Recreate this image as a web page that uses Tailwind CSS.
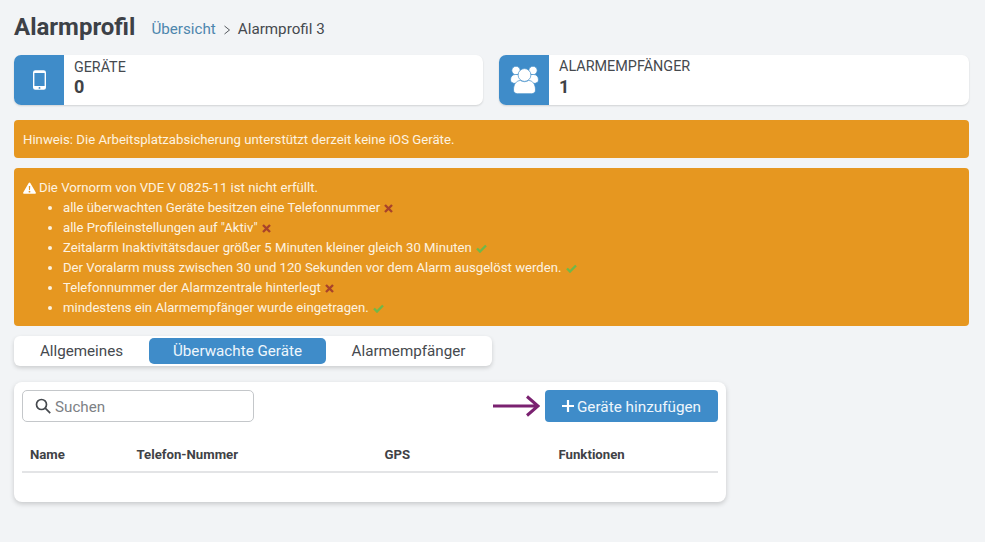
<!DOCTYPE html>
<html lang="de">
<head>
    <meta charset="UTF-8">
    <title>Alarmprofil</title>
    <script src="https://cdn.jsdelivr.net/npm/@tailwindcss/browser@4"></script>
</head>
<body class="bg-[#f2f4f6] font-['Roboto',sans-serif] text-[#3f4246] h-[542px] overflow-hidden">
<div class="pl-[14px] pr-[16px] pt-[12px]">

    <!-- Kopfzeile -->
    <div class="flex items-center h-[30px]">
        <h1 class="text-[24px] font-bold text-[#3d4147] leading-[30px]">Alarmprofil</h1>
        <a class="ml-[16px] mt-[5px] text-[15.2px] text-[#4d86ad]">Übersicht</a>
        <svg class="ml-[7px] mt-[5px]" width="8" height="10" viewBox="0 0 8 10" fill="none" stroke="#55595e" stroke-width="1"><path d="M1.5 1l5 4-5 4"/></svg>
        <span class="ml-[7px] mt-[5px] text-[15.2px] text-[#45494e]">Alarmprofil 3</span>
    </div>

    <!-- Kacheln -->
    <div class="grid grid-cols-[469px_1fr] gap-[16px] mt-[13px]">
        <div class="flex h-[50px] bg-white rounded-[7px] overflow-hidden shadow-[0_1px_2px_rgba(0,0,0,0.14)]">
            <div class="w-[50px] bg-[#3f8cc9] flex items-center justify-center">
                <svg width="13" height="20" viewBox="0 0 14 21"><path fill="#fff" fill-rule="evenodd" d="M2.5 0h9A2.5 2.5 0 0 1 14 2.5v16a2.5 2.5 0 0 1-2.5 2.5h-9A2.5 2.5 0 0 1 0 18.5v-16A2.5 2.5 0 0 1 2.5 0zM1.500 3v14h11V3zm5.500 15a1 1 0 1 0 0 2 1 1 0 0 0 0-2z"/></svg>
            </div>
            <div class="pl-[10px] pt-[2px]">
                <div class="text-[14.3px] leading-[20px] text-[#45494e]">GERÄTE</div>
                <div class="text-[18px] leading-[20px] font-bold text-[#3f4246]">0</div>
            </div>
        </div>
        <div class="flex h-[50px] bg-white rounded-[7px] overflow-hidden shadow-[0_1px_2px_rgba(0,0,0,0.14)]">
            <div class="w-[50px] bg-[#3f8cc9] flex items-center justify-center">
                <svg width="29" height="28" viewBox="0 0 29 28" fill="#fff" stroke="#3f8cc9" stroke-width="0.7">
                    <circle cx="6" cy="4.500" r="4.200"/>
                    <circle cx="23" cy="4.500" r="4.200"/>
                    <path d="M0.500 14c0-3.500 2-5.500 5-5.500h18c3 0 5 2 5 5.500 0 2-2 3.500-5 3.500h-18c-3 0-5-1.500-5-3.500z"/>
                    <circle cx="14.500" cy="9" r="6.400"/>
                    <path d="M3.500 24c0-6 3-9.500 7-9.500 1 .8 2.500 1.200 4 1.200s3-.4 4-1.200c4 0 7 3.500 7 9.500 0 2.500-2 3.700-4 3.700h-14c-2 0-4-1.200-4-3.700z"/>
                </svg>
            </div>
            <div class="pl-[10px] pt-[2px]">
                <div class="text-[14.4px] leading-[20px] text-[#45494e]">ALARMEMPFÄNGER</div>
                <div class="text-[18px] leading-[20px] font-bold text-[#3f4246]">1</div>
            </div>
        </div>
    </div>

    <!-- Hinweise -->
    <div class="mt-[15px] h-[38px] bg-[#e69720] rounded-[4px] px-[9px] pt-[1px] flex items-center text-[13.2px] text-[#fdf3e0]">
        Hinweis: Die Arbeitsplatzabsicherung unterstützt derzeit keine iOS Geräte.
    </div>

    <div class="mt-[10px] h-[158px] bg-[#e69720] rounded-[4px] pl-[9px] pt-[10px] text-[13.2px] leading-[20px] text-[#fdf3e0]">
        <div class="flex items-center">
            <svg class="mr-[3px]" width="13" height="12" viewBox="0 0 13 12"><path fill="#fff" fill-rule="evenodd" d="M6.500.5c.3 0 .6.200.8.500l5.500 9.500c.3.600 0 1.200-.7 1.200H.9c-.7 0-1-.6-.7-1.200L5.700 1c.2-.3.5-.5.800-.5zM5.800 4l.2 4h1l.2-4zM6.500 8.800a.9.9 0 1 0 0 1.800.9.9 0 0 0 0-1.800z"/></svg>
            <span>Die Vornorm von VDE V 0825-11 ist nicht erfüllt.</span>
        </div>
        <ul class="list-disc pl-[40px] text-[13.15px] marker:text-[#fdf3e0]">
            <li>alle überwachten Geräte besitzen eine Telefonnummer <svg class="inline-block ml-[1px] align-[-1px]" width="9" height="9" viewBox="0 0 9 9" stroke="#a8432a" stroke-width="2.4"><path d="M1 1l7 7M8 1l-7 7"/></svg></li>
            <li>alle Profileinstellungen auf "Aktiv" <svg class="inline-block ml-[1px] align-[-1px]" width="9" height="9" viewBox="0 0 9 9" stroke="#a8432a" stroke-width="2.4"><path d="M1 1l7 7M8 1l-7 7"/></svg></li>
            <li>Zeitalarm Inaktivitätsdauer größer 5 Minuten kleiner gleich 30 Minuten <svg class="inline-block ml-[1px] align-[-1px]" width="11" height="9" viewBox="0 0 11 9" fill="none" stroke="#6fb84a" stroke-width="2.4"><path d="M1 4.500l3 3 6-6"/></svg></li>
            <li>Der Voralarm muss zwischen 30 und 120 Sekunden vor dem Alarm ausgelöst werden. <svg class="inline-block ml-[1px] align-[-1px]" width="11" height="9" viewBox="0 0 11 9" fill="none" stroke="#6fb84a" stroke-width="2.4"><path d="M1 4.500l3 3 6-6"/></svg></li>
            <li>Telefonnummer der Alarmzentrale hinterlegt <svg class="inline-block ml-[1px] align-[-1px]" width="9" height="9" viewBox="0 0 9 9" stroke="#a8432a" stroke-width="2.4"><path d="M1 1l7 7M8 1l-7 7"/></svg></li>
            <li>mindestens ein Alarmempfänger wurde eingetragen. <svg class="inline-block ml-[1px] align-[-1px]" width="11" height="9" viewBox="0 0 11 9" fill="none" stroke="#6fb84a" stroke-width="2.4"><path d="M1 4.500l3 3 6-6"/></svg></li>
        </ul>
    </div>

    <!-- Tabs -->
    <div class="mt-[10px] w-[478px] h-[30px] bg-white rounded-[6px] shadow-[0_2px_4px_rgba(0,0,0,0.16)] flex items-center pl-[1px] text-[15.2px] text-[#45494e]">
        <div class="w-[134px] pr-[1px] text-center">Allgemeines</div>
        <div class="w-[177px] h-[26px] leading-[26px] bg-[#3f8cc9] rounded-[5px] text-center text-[#eef6fc]">Überwachte Geräte</div>
        <div class="w-[165px] text-center">Alarmempfänger</div>
    </div>

    <!-- Tabellenkarte -->
    <div class="mt-[16px] w-[712px] h-[120px] bg-white rounded-[8px] shadow-[0_2px_5px_rgba(0,0,0,0.18)] px-[8px] pt-[8px]">
        <div class="flex items-center justify-between">
            <div class="w-[232px] h-[32px] border border-[#c4c7ca] rounded-[5px] flex items-center pl-[12px]">
                <svg width="16" height="16" viewBox="0 0 16 16" fill="none" stroke="#45494e" stroke-width="1.700"><circle cx="6.500" cy="6.500" r="5"/><path d="M10.200 10.200l5 5"/></svg>
                <span class="ml-[4px] pt-[2px] text-[15.2px] text-[#7d8185]">Suchen</span>
            </div>
            <div class="flex items-center">
                <svg class="mr-[5px]" width="47" height="22" viewBox="0 0 47 22" fill="none" stroke="#7a2170" stroke-width="3"><path d="M0 11h45M34 1.500l11 9.500-11 9.500"/></svg>
                <div class="w-[173px] h-[32px] bg-[#3f8cc9] rounded-[4px] flex items-center justify-center text-[15.3px] text-[#eef6fc]">
                    <svg class="mr-[3px]" width="12" height="12" viewBox="0 0 12 12" stroke="#fff" stroke-width="2.200"><path d="M6 0v12M0 6h12"/></svg>
                    <span class="pt-[2px]">Geräte hinzufügen</span>
                </div>
            </div>
        </div>
        <div class="grid grid-cols-[106.500px_248px_174px_1fr] mt-[16px] h-[35px] pl-[8px] items-center text-[13.2px] font-bold text-[#3f4246] border-b-2 border-[#e3e4e6]">
            <div>Name</div>
            <div>Telefon-Nummer</div>
            <div>GPS</div>
            <div>Funktionen</div>
        </div>
    </div>
</div>
</body>
</html>
